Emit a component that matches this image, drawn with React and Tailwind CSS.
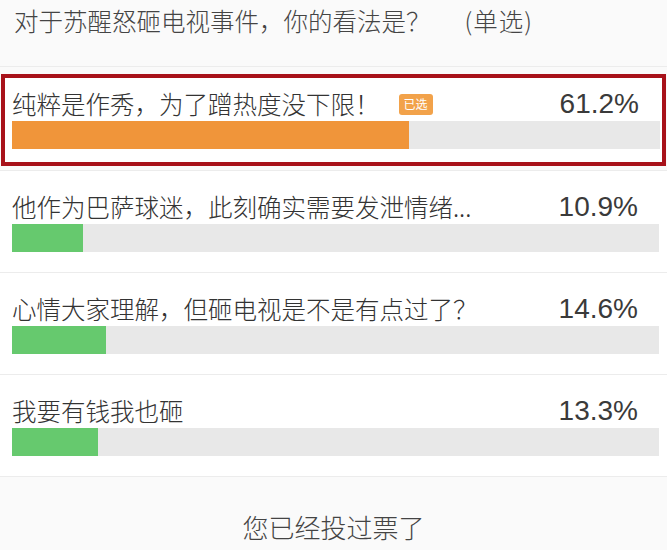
import React from 'react';

const options = [
  { label: '纯粹是作秀，为了蹭热度没下限！', pct: 61.2, selected: true },
  { label: '他作为巴萨球迷，此刻确实需要发泄情绪...', pct: 10.9 },
  { label: '心情大家理解，但砸电视是不是有点过了？', pct: 14.6 },
  { label: '我要有钱我也砸', pct: 13.3 },
];

const cjk = "font-['Noto_Sans_CJK_SC','Noto_Sans',sans-serif]";

const OptionBody = ({ option }) => (
  <>
    <div className="flex h-[32px] items-center justify-between pr-[21px]">
      <div className="flex items-center">
        <span className={`${cjk} text-[24.5px] font-light leading-none text-[#333]`}>{option.label}</span>
        {option.selected && (
          <span className={`${cjk} ml-[19px] flex h-[21px] w-[34px] items-center justify-center rounded-[3px] bg-[#f2a24a] text-[12px] leading-none text-white`}>
            已选
          </span>
        )}
      </div>
      <span className="font-['Liberation_Sans',sans-serif] text-[28px] leading-none text-[#3a3a3a]">{option.pct}%</span>
    </div>
    <div className="mt-[1px] h-[28px] w-full bg-[#e8e8e8]">
      <div
        className={option.selected ? 'h-full bg-[#f0953a]' : 'h-full bg-[#66c96e]'}
        style={{ width: `${option.pct}%` }}
      />
    </div>
  </>
);

export default function App() {
  const [first, ...rest] = options;
  return (
    <div className="h-[550px] w-[667px] overflow-hidden bg-[#fafafa]">
      {/* header */}
      <div className="flex h-[67px] items-start pl-[14px] pt-[5px] border-b border-[#ececec]">
        <span className={`${cjk} text-[24.5px] font-light leading-[32px] text-[#444]`}>对于苏醒怒砸电视事件，你的看法是？</span>
        <span className={`${cjk} ml-[34px] text-[24.5px] font-light leading-[32px] tracking-[1px] text-[#444]`}>(单选)</span>
      </div>

      {/* selected option */}
      <div className="mx-[1px] mt-[7px] border-[4px] border-[#a8121a] bg-white pl-[7px] pr-[2px] pt-[10px] pb-[13px]">
        <OptionBody option={first} />
      </div>

      <div className="mt-[4px] border-b border-[#ececec]" />

      {rest.map((o) => (
        <div key={o.label} className="border-b border-[#ececec] bg-white pl-[12px] pr-[8px] pt-[20px] pb-[20px]">
          <OptionBody option={o} />
        </div>
      ))}

      <div className="flex justify-center pt-[32px]">
        <span className={`${cjk} text-[26px] font-light leading-[36px] text-[#444]`}>您已经投过票了</span>
      </div>
    </div>
  );
}
